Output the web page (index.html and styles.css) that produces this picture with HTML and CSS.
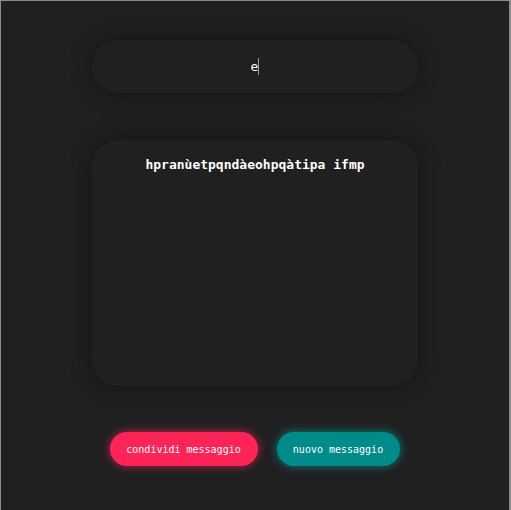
FILE: index.html
```html
<!DOCTYPE html>
<html>
<head>
<meta charset="utf-8">
<link rel="stylesheet" href="styles.css">
</head>
<body>
<div class="frame">
  <div class="field">
    <span class="field-text">e</span><span class="caret"></span>
  </div>
  <div class="message">
    <p class="message-text">hpranùetpqndàeohpqàtipa ifmp</p>
  </div>
  <div class="actions">
    <button class="btn btn-share">condividi messaggio</button>
    <button class="btn btn-new">nuovo messaggio</button>
  </div>
</div>
</body>
</html>
```

FILE: styles.css
```css
html, body {
  margin: 0;
  padding: 0;
  background: #202020;
}
.frame {
  box-sizing: border-box;
  width: 511px;
  height: 510px;
  border-top: 1px solid #8a8a8a;
  border-left: 1px solid #8a8a8a;
  border-right: 2px solid #8a8a8a;
  background: #202020;
  display: flex;
  flex-direction: column;
  align-items: center;
  padding-top: 39px;
  font-family: "DejaVu Sans Mono", monospace;
  color: #fff;
}
.field {
  width: 326px;
  height: 53px;
  border-radius: 26px;
  background: #202020;
  box-shadow: 0 0 22px rgba(0, 0, 0, 0.45);
  display: flex;
  align-items: center;
  justify-content: center;
  font-size: 13px;
}
.caret {
  display: inline-block;
  width: 1px;
  height: 17px;
  background: #9a9a9a;
}
.message {
  margin-top: 47px;
  width: 326px;
  height: 246px;
  border-radius: 26px;
  background: #202020;
  box-shadow: 0 0 22px rgba(0, 0, 0, 0.45);
  box-sizing: border-box;
  padding-top: 16px;
}
.message-text {
  margin: 0;
  text-align: center;
  font-size: 13px;
  font-weight: bold;
  line-height: 18px;
}
.actions {
  margin-top: 46px;
  display: flex;
  gap: 19px;
  padding-right: 1px;
}
.btn {
  height: 34px;
  border: none;
  border-radius: 17px;
  font-family: "DejaVu Sans Mono", monospace;
  font-size: 10px;
  color: #fff;
  padding: 0;
}
.btn-share {
  width: 148px;
  background: #ff2457;
  box-shadow: 0 0 10px rgba(255, 36, 87, 0.7);
}
.btn-new {
  width: 123px;
  background: #008b8b;
  box-shadow: 0 0 10px rgba(0, 190, 190, 0.6);
}
```
